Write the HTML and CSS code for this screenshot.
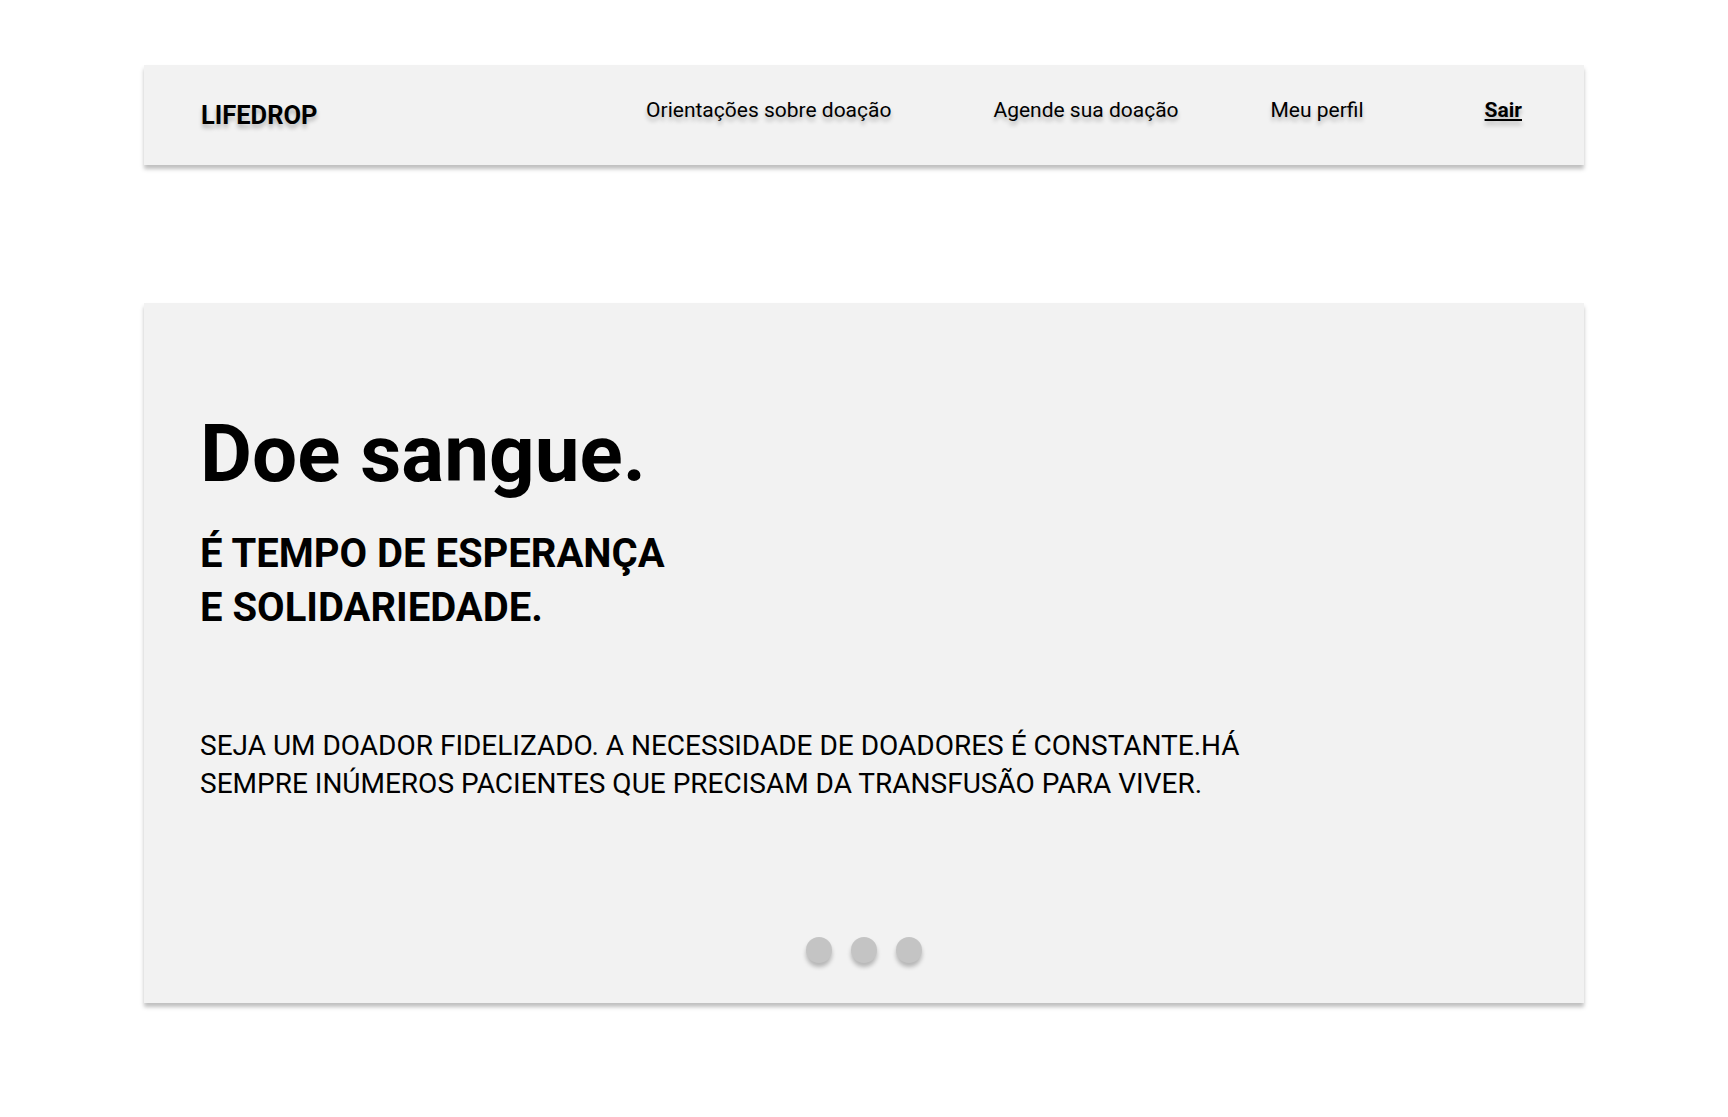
FILE: index.html
```html
<!DOCTYPE html>
<html lang="pt-BR">
<head>
<meta charset="utf-8">
<title>LifeDrop</title>
<link rel="stylesheet" href="styles.css">
</head>
<body>
<header class="topbar">
  <div class="brand">LIFEDROP</div>
  <nav class="menu">
    <a class="menu-link link-guide" href="#">Orientações sobre doação</a>
    <a class="menu-link link-schedule" href="#">Agende sua doação</a>
    <a class="menu-link link-profile" href="#">Meu perfil</a>
    <a class="menu-link link-logout" href="#">Sair</a>
  </nav>
</header>
<main class="hero">
  <h1 class="hero-title">Doe sangue.</h1>
  <h2 class="hero-subtitle">É TEMPO DE ESPERANÇA<br>E SOLIDARIEDADE.</h2>
  <p class="hero-text">SEJA UM DOADOR FIDELIZADO. A NECESSIDADE DE DOADORES É CONSTANTE.HÁ SEMPRE INÚMEROS PACIENTES QUE PRECISAM DA TRANSFUSÃO PARA VIVER.</p>
  <div class="dots">
    <span class="dot"></span>
    <span class="dot"></span>
    <span class="dot"></span>
  </div>
</main>
</body>
</html>
```
FILE: styles.css
```css
html, body {
  margin: 0;
  padding: 0;
  background: #ffffff;
}

body {
  font-family: Roboto, "Liberation Sans", Arial, sans-serif;
  color: #000000;
  padding-top: 65px;
  padding-bottom: 114px;
}

.topbar {
  box-sizing: border-box;
  width: 1440px;
  height: 100px;
  margin: 0 auto;
  padding: 0 62px 0 57px;
  background: #f2f2f2;
  box-shadow: 0 4px 4px rgba(0, 0, 0, 0.25);
  display: flex;
  align-items: flex-start;
}

.brand {
  margin-top: 35px;
  font-size: 25.5px;
  font-weight: 700;
  line-height: normal;
  text-shadow: 0 4px 4px rgba(0, 0, 0, 0.25);
}

.menu {
  margin-left: auto;
  margin-top: 33px;
  display: flex;
  align-items: flex-start;
}

.menu-link {
  font-size: 21px;
  line-height: normal;
  color: #000000;
  text-decoration: none;
  text-shadow: 0 4px 4px rgba(0, 0, 0, 0.25);
}

.link-schedule { margin-left: 102px; }
.link-profile { margin-left: 92px; }
.link-logout {
  margin-left: 121px;
  font-weight: 700;
  text-decoration: underline;
}

.hero {
  box-sizing: border-box;
  width: 1440px;
  height: 700px;
  margin: 138px auto 0;
  padding: 104px 55px 40px 56px;
  background: #f2f2f2;
  box-shadow: 0 4px 4px rgba(0, 0, 0, 0.25);
  display: flex;
  flex-direction: column;
}

.hero-title {
  margin: 0;
  font-size: 80px;
  font-weight: 700;
  line-height: 94px;
}

.hero-subtitle {
  margin: 26px 0 0;
  font-size: 40px;
  font-weight: 700;
  line-height: 54px;
}

.hero-text {
  margin: 92px 0 0;
  max-width: 1100px;
  font-size: 28px;
  font-weight: 400;
  line-height: 38px;
}

.dots {
  margin-top: auto;
  display: flex;
  justify-content: center;
  gap: 19px;
  padding-right: 2px;
}

.dot {
  width: 26px;
  height: 26px;
  border-radius: 50%;
  background: #c4c4c4;
  box-shadow: 0 4px 4px rgba(0, 0, 0, 0.25);
}
```
